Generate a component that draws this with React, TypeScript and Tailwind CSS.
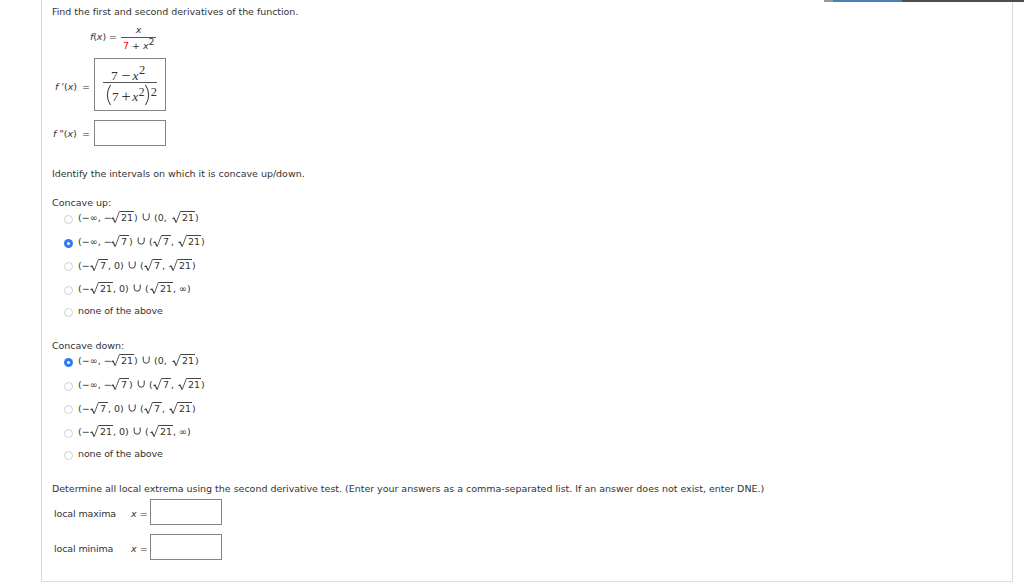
import { useState, type ReactNode } from "react";

function Root({ children, wide = false }: { children: ReactNode; wide?: boolean }) {
  return (
    <span className="flex h-[13px] items-start">
      <svg width="9" height="13" viewBox="0 0 9 13" fill="none" stroke="#333" className="shrink-0">
        <path d="M0.5 7.8 L2 7 L4.2 11.4" strokeWidth="1.1" />
        <path d="M4.2 11.6 L8.4 0.5 H9" strokeWidth="0.8" />
      </svg>
      <span
        className={`${wide ? "w-[14px]" : "w-[9px]"} h-[13px] border-t border-[#444] pl-px leading-[11px]`}
      >
        {children}
      </span>
    </span>
  );
}

const R21 = () => <Root wide>21</Root>;
const R7 = () => <Root>7</Root>;
const Cup = () => (
  <>
    <span className="w-[8px]">)</span>
    <svg width="12" height="13" viewBox="0 0 12 13" fill="none" stroke="#3a3a3a" className="shrink-0">
      <path d="M1.2 2.5 V6.3 Q1.2 9.2 4.2 9.2 Q7.2 9.2 7.2 6.3 V2.5" strokeWidth="1" />
    </svg>
  </>
);

const options: ReactNode[] = [
  <>
    <span className="w-[33px] tracking-[0.05px]">(−∞, −</span>
    <R21 />
    <Cup />
    <span className="w-[18px]">(0,</span>
    <R21 />
    <span>)</span>
  </>,
  <>
    <span className="w-[33px] tracking-[0.05px]">(−∞, −</span>
    <R7 />
    <Cup />
    <span className="w-[4px]">(</span>
    <R7 />
    <span className="w-[7px]">,</span>
    <R21 />
    <span>)</span>
  </>,
  <>
    <span className="w-[12px]">(−</span>
    <R7 />
    <span className="w-[12px]">, 0</span>
    <Cup />
    <span className="w-[4px]">(</span>
    <R7 />
    <span className="w-[7px]">,</span>
    <R21 />
    <span>)</span>
  </>,
  <>
    <span className="w-[12px]">(−</span>
    <R21 />
    <span className="w-[12px]">, 0</span>
    <Cup />
    <span className="w-[5px]">(</span>
    <R21 />
    <span>, ∞)</span>
  </>,
  <span className="tracking-[-0.11px]">none of the above</span>,
];

const rowHeights = ["h-[24px]", "h-[24px]", "h-[23px]", "h-[24px]", "h-[22px]"];

function Choices({ label, initial }: { label: string; initial: number }) {
  const [selected, setSelected] = useState(initial);
  return (
    <div role="radiogroup" aria-label={label}>
      {options.map((option, i) => (
        <div
          key={i}
          role="radio"
          aria-checked={selected === i}
          onClick={() => setSelected(i)}
          className={`${rowHeights[i]} flex items-center pl-[12px]`}
        >
          <span
            className={`${i === 4 ? "mt-[2px]" : "mt-[4px]"} mr-[5px] flex size-[9px] shrink-0 items-center justify-center rounded-full ${
              selected === i ? "bg-[#2f7bf6]" : "border border-[#cfcfcf] bg-white"
            }`}
          >
            {selected === i && <span className="size-[3px] rounded-full bg-white" />}
          </span>
          <span className={`${i === 4 ? "mb-px" : "-mb-px"} flex h-[13px] leading-[13px] whitespace-pre`}>
            {option}
          </span>
        </div>
      ))}
    </div>
  );
}

const Box = () => <div className="h-[26px] w-[72px] border border-[#858585] bg-white" />;

export default function App() {
  return (
    <div className="flex h-[585px] w-[1024px] flex-col overflow-hidden bg-white font-['DejaVu_Sans',Verdana,sans-serif] text-[9.5px] text-[#333]">
      <div className="z-10 -mb-[2px] ml-[824px] flex h-[2px] shrink-0">
        <div className="w-[9px] bg-[#999]" />
        <div className="w-[69px] bg-[#4a7ebb]" />
        <div className="flex-1 bg-[#4d4d4d]" />
      </div>
      <div className="ml-[41px] h-[582px] w-[972px] shrink-0 border-x border-b border-x-[#d8d8d8] border-b-[#dedede] pl-[10px]">
        <div className="flex h-[23px] items-center pt-[2px] tracking-[-0.045px]">
          Find the first and second derivatives of the function.
        </div>

        <div className="flex h-[35px] pl-[38px]">
          <div className="w-[31px] pt-[7px] leading-[13px] tracking-[-0.1px] whitespace-pre">
            <i>f</i>(<i>x</i>) =
          </div>
          <div className="w-[35px]">
            <div className="h-[15px] border-b border-[#555] text-center leading-[13px] italic">x</div>
            <div className="flex h-[16px] pl-[2px] leading-[15px] whitespace-pre">
              <span className="text-[#f00]">7</span>
              <span> + </span>
              <i>x</i>
              <span className="text-[9px] leading-[9px]">2</span>
            </div>
          </div>
        </div>

        <div className="flex h-[62px]">
          <div className="flex w-[42px] pt-[22px] pl-[3px] leading-[13px] whitespace-pre">
            <span className="w-[27px]"><i>f</i> '(<i>x</i>)</span>=
          </div>
          <div className="flex h-[53px] w-[72px] flex-col items-center border border-[#858585] pt-[7px] font-['Liberation_Serif',serif] text-[13.5px]">
            <div className="flex h-[17px] w-[54px] border-b border-[#555] pl-[8px] leading-[19px]">
              <span className="w-[9px]">7</span>
              <span className="flex w-[12px] justify-center text-[16px]">−</span>
              <i className="w-[7px] text-center">x</i>
              <span className="text-[12.5px] leading-[9px]">2</span>
            </div>
            <div className="flex h-[24px] w-[54px] pl-[3px] leading-[27px]">
              <svg width="5" height="23" viewBox="0 0 5 23" fill="none" stroke="#333" className="mr-px shrink-0">
                <path d="M4.5 2 Q-1.8 12 4.5 22" strokeWidth="1" />
              </svg>
              <span className="w-[8px]">7</span>
              <span className="flex w-[12px] justify-center text-[16px]">+</span>
              <i className="w-[7px] text-center">x</i>
              <span className="w-[6px] text-[11.5px] leading-[18px]">2</span>
              <svg width="5" height="23" viewBox="0 0 5 23" fill="none" stroke="#333" className="mr-px shrink-0">
                <path d="M0.5 2 Q6.8 12 0.5 22" strokeWidth="1" />
              </svg>
              <span className="text-[12.5px] leading-[18px]">2</span>
            </div>
          </div>
        </div>

        <div className="flex h-[43px]">
          <div className="flex w-[42px] pt-[7px] pl-px leading-[13px] whitespace-pre">
            <span className="w-[29px]"><i>f</i> "(<i>x</i>)</span>=
          </div>
          <Box />
        </div>

        <div className="flex h-[22px] items-center tracking-[-0.02px]">
          Identify the intervals on which it is concave up/down.
        </div>
        <div className="flex h-[20px] items-end leading-[13px]">
          <span className="-mb-[4px]">Concave up:</span>
        </div>
        <Choices label="Concave up" initial={1} />
        <div className="flex h-[26px] items-end leading-[13px] tracking-[-0.05px]">
          <span className="-mb-[4px]">Concave down:</span>
        </div>
        <Choices label="Concave down" initial={0} />

        <div className="flex h-[34px] items-end leading-[13px] tracking-[-0.022px] whitespace-nowrap">
          <span className="mb-[4px]">
            Determine all local extrema using the second derivative test. (Enter your answers as a comma-separated list. If an answer does not exist, enter DNE.)
          </span>
        </div>
        <div className="flex h-[35px] pl-[2px] leading-[13px]">
          <span className="w-[77px] pt-[8px] tracking-[-0.13px]">local maxima</span>
          <span className="w-[19px] pt-[8px]"><i>x</i> =</span>
          <Box />
        </div>
        <div className="flex h-[35px] pl-[2px] leading-[13px]">
          <span className="w-[77px] pt-[8px] tracking-[-0.13px]">local minima</span>
          <span className="w-[19px] pt-[8px]"><i>x</i> =</span>
          <Box />
        </div>
      </div>
    </div>
  );
}
